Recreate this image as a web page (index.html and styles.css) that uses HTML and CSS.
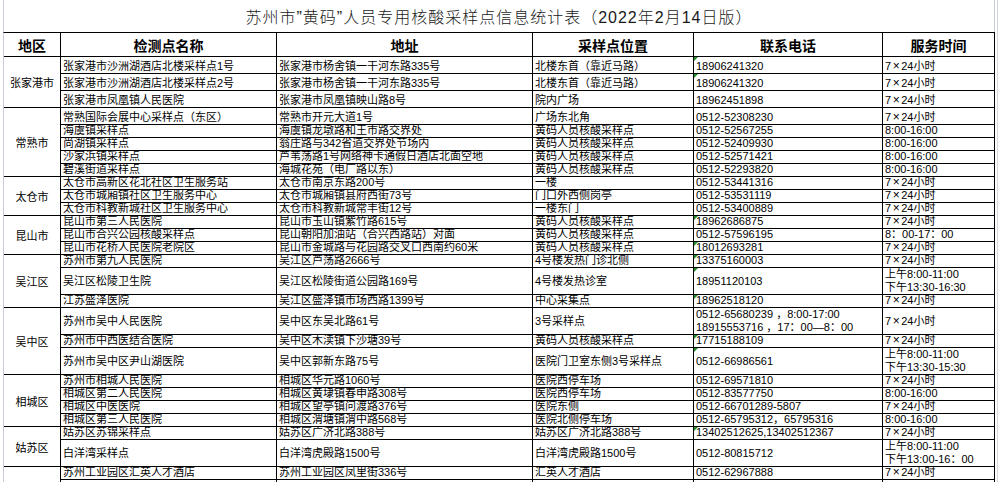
FILE: index.html
```html
<!DOCTYPE html>
<html lang="zh-CN">
<head>
<meta charset="utf-8">
<title>苏州市黄码人员专用核酸采样点信息统计表</title>
<link rel="stylesheet" href="styles.css">
</head>
<body>
<div class="sheet">
  <div class="title">苏州市”黄码”人员专用核酸采样点信息统计表（2022年2月14日版）</div>
  <div class="grid">
    <div class="h">地区</div><div class="h">检测点名称</div><div class="h">地址</div><div class="h">采样点位置</div><div class="h">联系电话</div><div class="h">服务时间</div>

    <div class="r s3">张家港市</div>
    <div class="c">张家港市沙洲湖酒店北楼采样点1号</div><div class="c">张家港市杨舍镇一干河东路335号</div><div class="c">北楼东首（靠近马路）</div><div class="c g">18906241320</div><div class="c">7<span class="x">×</span>24小时</div>
    <div class="c">张家港市沙洲湖酒店北楼采样点2号</div><div class="c">张家港市杨舍镇一干河东路335号</div><div class="c">北楼东首（靠近马路）</div><div class="c g">18906241320</div><div class="c">7<span class="x">×</span>24小时</div>
    <div class="c">张家港市凤凰镇人民医院</div><div class="c">张家港市凤凰镇映山路8号</div><div class="c">院内广场</div><div class="c">18962451898</div><div class="c">7<span class="x">×</span>24小时</div>

    <div class="r s5">常熟市</div>
    <div class="c">常熟国际会展中心采样点（东区）</div><div class="c">常熟市开元大道1号</div><div class="c">广场东北角</div><div class="c">0512-52308230</div><div class="c">7<span class="x">×</span>24小时</div>
    <div class="c">海虞镇采样点</div><div class="c">海虞镇龙墩路和王市路交界处</div><div class="c">黄码人员核酸采样点</div><div class="c">0512-52567255</div><div class="c">8:00-16:00</div>
    <div class="c">尚湖镇采样点</div><div class="c">翁庄路与342省道交界处节场内</div><div class="c">黄码人员核酸采样点</div><div class="c">0512-52409930</div><div class="c">8:00-16:00</div>
    <div class="c">沙家浜镇采样点</div><div class="c">芦苇荡路1号网络神卡通假日酒店北面空地</div><div class="c">黄码人员核酸采样点</div><div class="c">0512-52571421</div><div class="c">8:00-16:00</div>
    <div class="c">碧溪街道采样点</div><div class="c">海城花苑（电厂路以东）</div><div class="c">黄码人员核酸采样点</div><div class="c">0512-52293820</div><div class="c">8:00-16:00</div>

    <div class="r s3">太仓市</div>
    <div class="c">太仓市高新区花北社区卫生服务站</div><div class="c">太仓市南京东路200号</div><div class="c">一楼</div><div class="c">0512-53441316</div><div class="c">7<span class="x">×</span>24小时</div>
    <div class="c">太仓市城厢镇社区卫生服务中心</div><div class="c">太仓市城厢镇县府西街73号</div><div class="c">门口外西侧岗亭</div><div class="c">0512-53531119</div><div class="c">7<span class="x">×</span>24小时</div>
    <div class="c">太仓市科教新城社区卫生服务中心</div><div class="c">太仓市科教新城常丰街12号</div><div class="c">一楼东门</div><div class="c">0512-53400889</div><div class="c">7<span class="x">×</span>24小时</div>

    <div class="r s3">昆山市</div>
    <div class="c">昆山市第三人民医院</div><div class="c">昆山市玉山镇紫竹路615号</div><div class="c">黄码人员核酸采样点</div><div class="c g">18962686875</div><div class="c">7<span class="x">×</span>24小时</div>
    <div class="c">昆山市合兴公园核酸采样点</div><div class="c">昆山朝阳加油站（合兴西路站）对面</div><div class="c">黄码人员核酸采样点</div><div class="c">0512-57596195</div><div class="c">8：00-17：00</div>
    <div class="c">昆山市花桥人民医院老院区</div><div class="c">昆山市金城路与花园路交叉口西南约60米</div><div class="c">黄码人员核酸采样点</div><div class="c g">18012693281</div><div class="c">7<span class="x">×</span>24小时</div>

    <div class="r s3">吴江区</div>
    <div class="c">苏州市第九人民医院</div><div class="c">吴江区芦荡路2666号</div><div class="c">4号楼发热门诊北侧</div><div class="c g">13375160003</div><div class="c">7<span class="x">×</span>24小时</div>
    <div class="c m">吴江区松陵卫生院</div><div class="c m">吴江区松陵街道公园路169号</div><div class="c m">4号楼发热诊室</div><div class="c m g">18951120103</div><div class="c m">上午8:00-11:00<br>下午13:30-16:30</div>
    <div class="c">江苏盛泽医院</div><div class="c">吴江区盛泽镇市场西路1399号</div><div class="c">中心采集点</div><div class="c g">18962518120</div><div class="c">7<span class="x">×</span>24小时</div>

    <div class="r s3">吴中区</div>
    <div class="c m">苏州市吴中人民医院</div><div class="c m">吴中区东吴北路61号</div><div class="c m">3号采样点</div><div class="c m">0512-65680239 ，8:00-17:00<br>18915553716 ，17：00—8：00</div><div class="c m">7<span class="x">×</span>24小时</div>
    <div class="c">苏州市中西医结合医院</div><div class="c">吴中区木渎镇下沙塘39号</div><div class="c">黄码人员核酸采样点</div><div class="c g">17715188109</div><div class="c">7<span class="x">×</span>24小时</div>
    <div class="c m">苏州市吴中区尹山湖医院</div><div class="c m">吴中区郭新东路75号</div><div class="c m">医院门卫室东侧3号采样点</div><div class="c m g">0512-66986561</div><div class="c m">上午8:00-11:00<br>下午13:30-15:30</div>

    <div class="r s4">相城区</div>
    <div class="c">苏州市相城人民医院</div><div class="c">相城区华元路1060号</div><div class="c">医院西停车场</div><div class="c">0512-69571810</div><div class="c">7<span class="x">×</span>24小时</div>
    <div class="c">相城区第二人民医院</div><div class="c">相城区黄埭镇春申路308号</div><div class="c">医院西停车场</div><div class="c">0512-83577750</div><div class="c">8:00-16:00</div>
    <div class="c">相城区中医医院</div><div class="c">相城区望亭镇问渡路376号</div><div class="c">医院东侧</div><div class="c">0512-66701289-5807</div><div class="c">7<span class="x">×</span>24小时</div>
    <div class="c">相城区第三人民医院</div><div class="c">相城区渭塘镇渭中路568号</div><div class="c">医院北侧停车场</div><div class="c">0512-65795312，65795316</div><div class="c">8:00-16:00</div>

    <div class="r s2">姑苏区</div>
    <div class="c">姑苏区苏锦采样点</div><div class="c">姑苏区广济北路388号</div><div class="c">姑苏区广济北路388号</div><div class="c g">13402512625,13402512367</div><div class="c">7<span class="x">×</span>24小时</div>
    <div class="c m">白洋湾采样点</div><div class="c m">白洋湾虎殿路1500号</div><div class="c m">白洋湾虎殿路1500号</div><div class="c m">0512-80815712</div><div class="c m">上午8:00-11:00<br>下午13:00-16：00</div>

    <div class="r s2"></div>
    <div class="c">苏州工业园区汇英人才酒店</div><div class="c">苏州工业园区凤里街336号</div><div class="c">汇英人才酒店</div><div class="c">0512-62967888</div><div class="c">7<span class="x">×</span>24小时</div>
    <div class="c"></div><div class="c"></div><div class="c"></div><div class="c"></div><div class="c"></div>
  </div>
</div>
</body>
</html>
```
FILE: styles.css
```css
html, body {
  margin: 0;
  padding: 0;
  background: #fff;
  overflow: hidden;
}

.sheet {
  box-sizing: border-box;
  width: 998px;
  height: 482px;
  overflow: hidden;
  border-right: 1px solid #d3d9e1;
}

.title {
  box-sizing: border-box;
  margin-left: 3px;
  width: 992px;
  height: 32px;
  border-left: 1px solid #c6cdd6;
  border-right: 1px solid #c6cdd6;
  display: flex;
  align-items: center;
  justify-content: center;
  font-family: "Liberation Sans", "Noto Sans CJK SC", sans-serif;
  font-size: 16px;
  font-weight: 300;
  letter-spacing: 1px;
  color: #1a1a1a;
}

.grid {
  margin-left: 3px;
  width: max-content;
  display: grid;
  grid-template-columns: 57px 216px 256px 161px 189px 112px;
  grid-template-rows:
    24px
    17px 17px 17px 17px
    13px 13px 13px 13px 13px 13px 13px 13px 13px 13px 13px
    27px 13px 27px 13px 27px
    13px 13px 13px 13px
    13px 27px
    13px 13px;
  border-top: 1px solid #000;
  border-left: 1px solid #c6cdd6;
}

.grid > div {
  box-sizing: border-box;
  border-right: 1px solid #000;
  border-bottom: 1px solid #000;
  min-width: 0;
}

.h {
  display: flex;
  align-items: center;
  justify-content: center;
  font-family: "Noto Sans CJK SC", sans-serif;
  font-size: 14px;
  font-weight: 700;
  color: #000;
}

.r {
  display: flex;
  align-items: center;
  justify-content: center;
  font-family: "Noto Sans CJK SC", sans-serif;
  font-size: 11px;
  color: #000;
}

.s2 { grid-row: span 2; }
.s3 { grid-row: span 3; }
.s4 { grid-row: span 4; }
.s5 { grid-row: span 5; }

.c {
  position: relative;
  display: flex;
  align-items: flex-end;
  padding: 0 1px 0 2px;
  font-family: "Liberation Sans", "Noto Sans CJK SC", sans-serif;
  font-size: 11px;
  line-height: 13px;
  color: #000;
  white-space: nowrap;
}

.c.m {
  align-items: center;
}

.x {
  font-size: 12px;
  margin: 0 1.5px;
}

.g::before {
  content: "";
  position: absolute;
  left: 0;
  top: 0;
  border-top: 4px solid #1f8f2a;
  border-right: 4px solid transparent;
}
```
